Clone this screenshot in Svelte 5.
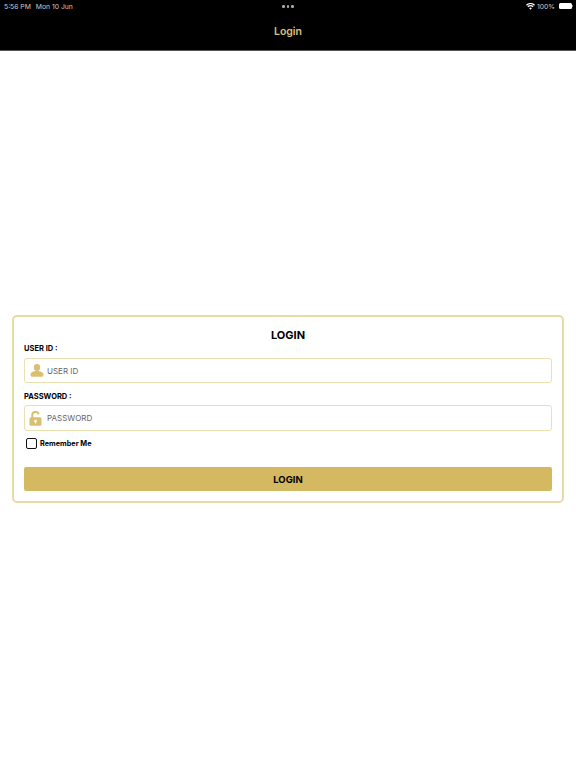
<script>
  let userId = $state('');
  let password = $state('');
  let remember = $state(false);
</script>

<div class="page">
  <header class="top">
    <div class="status">
      <div class="st-left"><span>5:56 PM</span><span>Mon 10 Jun</span></div>
      <div class="dots"><i></i><i></i><i></i></div>
      <div class="st-right">
        <svg class="wifi" width="9" height="7" viewBox="0 0 18 14"><path d="M9 13.5 6.3 10.4a4 4 0 0 1 5.400 0zM4.600 8.600 2.800 6.600a9.200 9.200 0 0 1 12.400 0l-1.800 2a6.600 6.600 0 0 0-8.800 0zM1.700 5.300 0 3.400a13.400 13.400 0 0 1 18 0l-1.700 1.900a10.900 10.900 0 0 0-14.600 0z" fill="#fff"/></svg>
        <span>100%</span>
        <span class="batt"><b></b></span>
      </div>
    </div>
    <div class="nav">Login</div>
  </header>

  <main class="main">
    <form class="card" onsubmit={(e) => e.preventDefault()}>
      <h1>LOGIN</h1>
      <label class="lab" for="uid">USER ID :</label>
      <div class="field">
        <svg class="ico" width="14" height="13" viewBox="0 0 14 13"><ellipse cx="7" cy="3.500" rx="3.200" ry="3.400" fill="#d9c070"/><path d="M0.500 10.800c0-2.500 3-3.700 6.500-3.700s6.500 1.200 6.500 3.700c0 1.400-1 2-2 2H2.500c-1 0-2-.6-2-2z" fill="#d9c070"/></svg>
        <input id="uid" placeholder="USER ID" bind:value={userId} />
      </div>
      <label class="lab second" for="pw">PASSWORD :</label>
      <div class="field tall">
        <svg class="ico lock" width="13" height="15" viewBox="0 0 13 15"><path d="M3.300 7V4.200a3.200 3.200 0 0 1 6.300-.9" fill="none" stroke="#d9c070" stroke-width="2"/><rect x="0.500" y="6.300" width="12" height="8.500" rx="1.500" fill="#d9c070"/><circle cx="6.500" cy="10" r="1.300" fill="#fff"/><rect x="5.900" y="10" width="1.200" height="2.500" fill="#fff"/></svg>
        <input id="pw" type="password" placeholder="PASSWORD" bind:value={password} />
      </div>
      <label class="rem">
        <input type="checkbox" bind:checked={remember} />
        <span>Remember Me</span>
      </label>
      <button type="submit">LOGIN</button>
    </form>
  </main>
</div>

<style>
  :global(body) { margin: 0; background: #fff; }
  .page { width: 576px; height: 768px; display: flex; flex-direction: column; font-family: Inter, "Liberation Sans", sans-serif; color: #000; }
  .top { height: 50px; background: #000; display: flex; flex-direction: column; flex: none; border-bottom: 1px solid #555; margin-bottom: -1px; }
  .status { height: 12px; display: flex; justify-content: space-between; align-items: center; padding: 0 4px; color: #ccc; font-size: 6.800px; position: relative; }
  .st-left { display: flex; gap: 5px; }
  .st-right { display: flex; align-items: center; gap: 2px; }
  .dots { display: flex; gap: 2px; position: absolute; left: 282px; top: 5px; }
  .dots i { width: 2.500px; height: 2.500px; border-radius: 50%; background: #aaa; }
  .batt { width: 13px; height: 6px; background: #fff; border-radius: 1.500px; margin-left: 2px; display: block; position: relative; }
  .batt b { position: absolute; right: -1px; top: 2px; width: 1px; height: 2px; background: #777; }
  .nav { flex: 1; display: flex; align-items: center; justify-content: center; color: #d9c27c; font-size: 10.500px; font-weight: 600; }
  .main { flex: 1; display: flex; align-items: center; padding: 0 12px; }
  .card { width: 100%; box-sizing: border-box; height: 188px; border: 2px solid #e8d9a5; border-radius: 5px; padding: 11px 10px 0; background: #fff; display: flex; flex-direction: column; }
  h1 { margin: 0; text-align: center; font-size: 11px; font-weight: 700; line-height: 15px; }
  .lab { font-size: 7.500px; font-weight: 700; line-height: 10px; margin-top: 1px; margin-bottom: 4px; }
  .lab.second { margin-top: 9px; margin-bottom: 3px; }
  .field { height: 25px; box-sizing: border-box; border: 1px solid #ecdfb0; border-radius: 3px; display: flex; align-items: center; padding-left: 5px; gap: 3px; flex: none; }
  .field.tall { height: 26px; }
  .lock { margin-left: -1px; margin-right: 2px; }
  .ico { flex: none; }
  input:not([type="checkbox"]) { border: 0; outline: 0; flex: 1; font: inherit; font-size: 8px; padding: 0; min-width: 0; background: none; }
  input::placeholder { color: #666; opacity: 1; }
  .rem { display: flex; align-items: center; gap: 3px; margin: 7px 0 0 2px; font-size: 7.300px; font-weight: 700; height: 11px; }
  .rem input { appearance: none; margin: 0; width: 11px; height: 11px; box-sizing: border-box; border: 1.500px solid #111; border-radius: 2px; background: #fff; }
  button { margin-top: 18px; height: 24px; border: 0; border-radius: 2px; background: #d4b962; color: #000; font: inherit; font-size: 9.500px; font-weight: 700; }
</style>
